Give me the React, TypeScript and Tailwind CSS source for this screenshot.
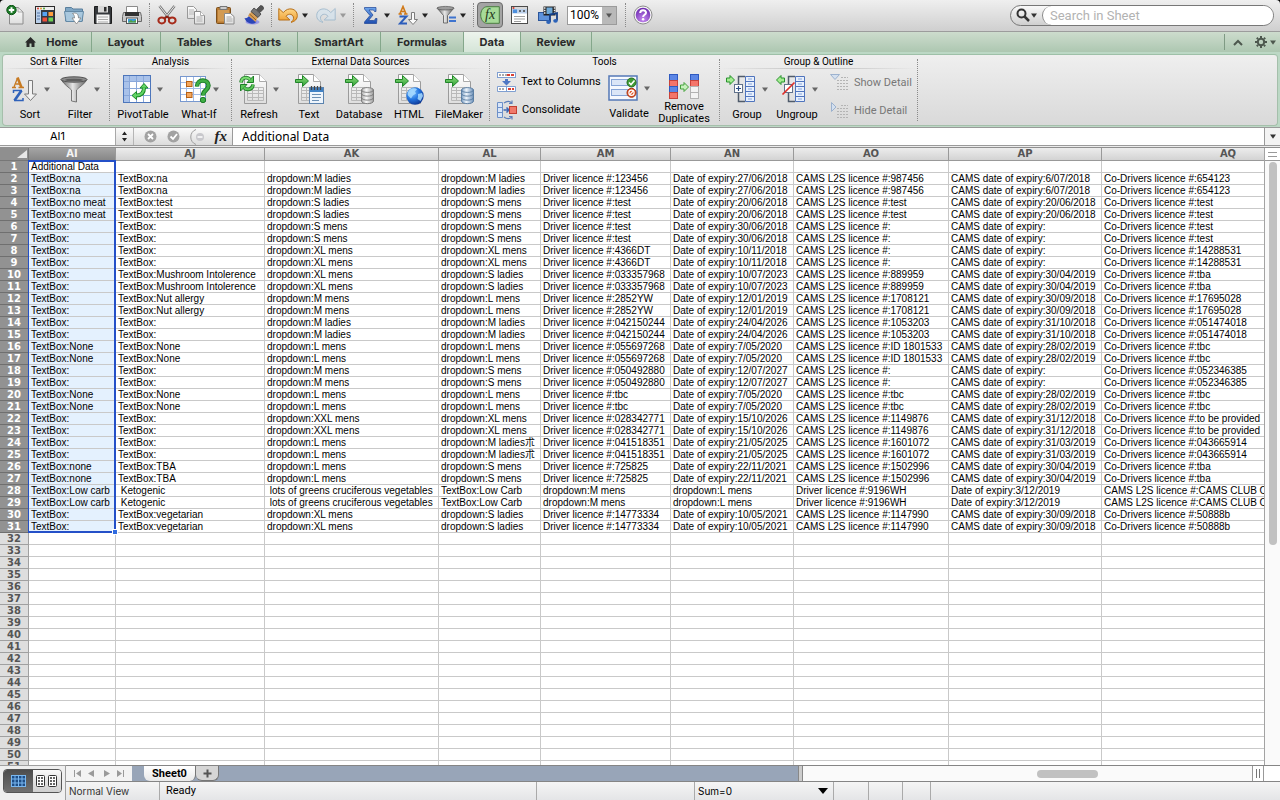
import React from "react";

type IconProps = { className?: string };

const Defs = () => (
  <svg width="0" height="0" className="absolute" aria-hidden="true">
    <defs>
      <linearGradient id="paper" x1="0" y1="0" x2="0" y2="1">
        <stop offset="0" stopColor="#ffffff" />
        <stop offset="1" stopColor="#dedede" />
      </linearGradient>
      <linearGradient id="green" x1="0" y1="0" x2="0" y2="1">
        <stop offset="0" stopColor="#8fe07f" />
        <stop offset="1" stopColor="#2f9e33" />
      </linearGradient>
      <linearGradient id="blue" x1="0" y1="0" x2="0" y2="1">
        <stop offset="0" stopColor="#6fa6ec" />
        <stop offset="1" stopColor="#1f4fb0" />
      </linearGradient>
      <linearGradient id="orange" x1="0" y1="0" x2="0" y2="1">
        <stop offset="0" stopColor="#ffd98a" />
        <stop offset="1" stopColor="#ec9a2b" />
      </linearGradient>
      <linearGradient id="metal" x1="0" y1="0" x2="1" y2="0">
        <stop offset="0" stopColor="#5c5c5c" />
        <stop offset="0.45" stopColor="#e6e6e6" />
        <stop offset="1" stopColor="#5a5a5a" />
      </linearGradient>
      <linearGradient id="drum" x1="0" y1="0" x2="1" y2="0">
        <stop offset="0" stopColor="#a9a9a9" />
        <stop offset="0.4" stopColor="#fafafa" />
        <stop offset="1" stopColor="#9c9c9c" />
      </linearGradient>
      <linearGradient id="drumBlue" x1="0" y1="0" x2="1" y2="0">
        <stop offset="0" stopColor="#7c9fc4" />
        <stop offset="0.4" stopColor="#eef5fc" />
        <stop offset="1" stopColor="#6b8fb8" />
      </linearGradient>
      <radialGradient id="globe" cx="0.35" cy="0.3" r="0.8">
        <stop offset="0" stopColor="#7fc4ff" />
        <stop offset="0.5" stopColor="#2274e0" />
        <stop offset="1" stopColor="#0b2d86" />
      </radialGradient>
      <radialGradient id="purple" cx="0.5" cy="0.8" r="0.8">
        <stop offset="0" stopColor="#c58af0" />
        <stop offset="1" stopColor="#6a27ad" />
      </radialGradient>
    </defs>
  </svg>
);

const Caret = ({ className = "fill-[#333]" }: IconProps) => (
  <svg width="6" height="5" viewBox="0 0 6 5" className={className}>
    <path d="M0 0.5h6L3 4.8z" />
  </svg>
);

/* toolbar icons */

const NewIcon = () => (
  <svg width="20" height="20" viewBox="0 0 20 20">
    <path d="M3.500 2.500h8.500l5 4.500v12H3.500z" fill="url(#paper)" stroke="#8c8c8c" />
    <path d="M12 2.500v4.500h5z" fill="#f5f5f5" stroke="#999" strokeWidth="0.800" />
    <circle cx="5.500" cy="5" r="4.700" fill="#1d7a28" stroke="#0d5516" />
    <path d="M5.500 2.300v5.400M2.800 5h5.400" stroke="#fff" strokeWidth="1.900" />
  </svg>
);

const GalleryIcon = () => (
  <svg width="20" height="20" viewBox="0 0 20 20">
    <rect x="0.500" y="1.500" width="19" height="17" fill="#353a42" stroke="#2b2b2b" />
    <rect x="1" y="2" width="18" height="3" fill="#ededed" />
    <circle cx="3" cy="3.500" r="1" fill="#d83a2c" />
    <circle cx="6" cy="3.500" r="1" fill="#e59b27" />
    <circle cx="9" cy="3.500" r="1" fill="#4ba435" />
    <rect x="1" y="5" width="5" height="13" fill="#b9cfea" />
    <path d="M2 8h3M2 11h3M2 14h3" stroke="#5577a5" />
    <rect x="7.500" y="7" width="4.500" height="4" fill="#58a4f2" />
    <rect x="13.500" y="7" width="4.500" height="4" fill="#ff9d3c" />
    <rect x="7.500" y="12.500" width="4.500" height="4" fill="#ef4f38" />
    <rect x="13.500" y="12.500" width="4.500" height="4" fill="#6ed253" />
  </svg>
);

const OpenIcon = () => (
  <svg width="20" height="20" viewBox="0 0 20 20">
    <path d="M1.500 4V2.500h6L9 4h9.500v12h-17z" fill="#7fa6c4" stroke="#5a7f9c" />
    <path d="M0.500 6.500h19l-1.500 10H2z" fill="#a9c8de" stroke="#6389a6" />
    <path d="M10.500 8c3 0 4 2 4 5h2.500l-4.500 6-4.500-6h2.500c0-2-.4-3.500-2-4.500z" fill="#fff" stroke="#777" strokeWidth="0.700" />
  </svg>
);

const SaveIcon = () => (
  <svg width="20" height="20" viewBox="0 0 20 20">
    <path d="M1.500 1.500h16l1 1v16h-17z" fill="#34373b" stroke="#1e1e1e" />
    <rect x="5" y="1" width="10" height="6.500" fill="#d8d8d8" />
    <rect x="11" y="2" width="2.500" height="4.500" fill="#2d2d2d" />
    <rect x="3.500" y="9.500" width="13" height="9" fill="#f7f7f7" />
    <path d="M5 12h10M5 14.500h10M5 17h10" stroke="#a9a9a9" />
  </svg>
);

const PrintIcon = () => (
  <svg width="20" height="20" viewBox="0 0 20 20">
    <path d="M4.500 1.500h11v7h-11z" fill="#fff" stroke="#8b8b8b" />
    <path d="M1.500 7.500h17l1 4v5h-19v-5z" fill="#c8c8c8" stroke="#6a6a6a" />
    <path d="M3 7h14v4H3z" fill="#333" />
    <rect x="4.500" y="13" width="11" height="5.500" fill="#fff" stroke="#555" />
    <path d="M6 14h8v3.500H6z" fill="#3c9bd6" />
    <path d="M6 17.500l3-2.500 2 1.500 3-1.500v2.500z" fill="#4f9f3d" />
  </svg>
);

const CutIcon = () => (
  <svg width="20" height="20" viewBox="0 0 20 20" fill="none">
    <path d="M2.500 1l9 11.500M17.500 1l-9 11.500" stroke="#777" strokeWidth="2.600" />
    <path d="M2.500 1l9 11.500M17.500 1l-9 11.500" stroke="#e9e9e9" strokeWidth="1" />
    <ellipse cx="4.800" cy="15.400" rx="3.400" ry="3" stroke="#a62a1a" strokeWidth="2" />
    <ellipse cx="15.200" cy="15.400" rx="3.400" ry="3" stroke="#a62a1a" strokeWidth="2" />
    <path d="M7.500 13.500l2.500-2 2.500 2" stroke="#8c2114" strokeWidth="2" />
  </svg>
);

const CopyIcon = () => (
  <svg width="20" height="20" viewBox="0 0 20 20">
    <path d="M1.500 1.500h6l3 3v9h-9z" fill="url(#paper)" stroke="#999" />
    <path d="M3 5h5M3 7h5M3 9h5" stroke="#b5b5b5" />
    <path d="M8.500 6.500h6l4 4v8.500h-10z" fill="url(#paper)" stroke="#8a8a8a" />
    <path d="M14.500 6.500v4h4" fill="#fff" stroke="#999" strokeWidth="0.800" />
    <path d="M10.500 12h6M10.500 14h6M10.500 16h6" stroke="#b0b0b0" />
  </svg>
);

const PasteIcon = () => (
  <svg width="20" height="20" viewBox="0 0 20 20">
    <rect x="1.500" y="2.500" width="14" height="16" rx="1" fill="#b97b33" stroke="#7c4f1a" />
    <rect x="3" y="5" width="11" height="11.500" fill="#d29a52" />
    <path d="M5 1.500h7v3H5z" fill="#ccc" stroke="#777" />
    <path d="M9.500 8.500h6l3.500 3v7.500H9.500z" fill="url(#paper)" stroke="#8a8a8a" />
    <path d="M11.500 12h5M11.500 14h6M11.500 16h6" stroke="#aaa" />
  </svg>
);

const BrushIcon = () => (
  <svg width="20" height="20" viewBox="0 0 20 20">
    <ellipse cx="8.500" cy="17" rx="7" ry="2.500" fill="#9d9be4" />
    <path d="M0.500 13c2 .5 3.500-.5 4.500-2l7.500 6c-3.500 3-10 2-12-4z" fill="#2c46b8" />
    <path d="M4 10.500L7.500 6.500l6.500 5.500-2.500 5z" fill="#d9a058" />
    <path d="M5.500 9l6.500 6" stroke="#8d5d22" />
    <path d="M7 6.500l3-3.500 7 6-3 3.500z" fill="#777" stroke="#3b3b3b" strokeWidth="0.800" />
    <path d="M12.500 4.500L16.500.5c2 0 3.500 1.500 3 3.500L16 7.500z" fill="#555" stroke="#333" strokeWidth="0.600" />
  </svg>
);

const UndoIcon = () => (
  <svg width="20" height="20" viewBox="0 0 20 20">
    <path d="M0.800 3.500v11.500h11L8 11.200c2.500-3.500 8-2 7.500 2.300-.2 1.600-1 2.800-2.500 3.800 4-.8 6.300-3.300 6.300-6.800C19.300 3.500 10 1.300 5.300 7.600z" fill="url(#orange)" stroke="#b86f16" />
  </svg>
);

const RedoIcon = () => (
  <svg width="20" height="20" viewBox="0 0 20 20" opacity="0.700">
    <path d="M19.200 3.500v11.500h-11L12 11.200c-2.500-3.500-8-2-7.500 2.300.2 1.600 1 2.800 2.500 3.800-4-.8-6.300-3.300-6.300-6.800C.7 3.500 10 1.300 14.700 7.600z" fill="#d4e3ee" stroke="#8eafc8" />
  </svg>
);

const SumIcon = () => (
  <svg width="20" height="20" viewBox="0 0 20 20">
    <path d="M4.500 2.500h11.500v4h-1.500c-.2-1-.8-1.500-2-1.500H9l4 5-4.500 5.500h4.800c1.200 0 1.800-.6 2.200-2H17l-.5 5h-12v-1.500L10 10.500 4.500 4z" fill="url(#blue)" stroke="#1d4395" strokeWidth="0.700" />
  </svg>
);

const SortSmallIcon = () => (
  <svg width="20" height="20" viewBox="0 0 20 20">
    <path d="M0.500 9h3.500M6 9h3.500M2 8.500L5 1.500l3 7.500M3.500 6.500h4" fill="none" stroke="#d07a1a" strokeWidth="1.600" />
    <path d="M1.500 11.500h7l-6.500 7h7" fill="none" stroke="#2c5dbb" strokeWidth="1.900" />
    <path d="M13.500 7.500h3v7h3L15 19.500l-4.500-5h3z" fill="#fafafa" stroke="#7d7d7d" />
  </svg>
);

const FilterSmallIcon = () => (
  <svg width="20" height="20" viewBox="0 0 20 20">
    <path d="M1 3h17l-6.500 7.500V18h-4v-7.500z" fill="url(#metal)" stroke="#555" strokeWidth="0.800" />
    <ellipse cx="9.500" cy="3.200" rx="8.500" ry="1.800" fill="#9d9d9d" stroke="#555" strokeWidth="0.700" />
    <path d="M13 12.500h7M13 16h7" stroke="#3f74cf" strokeWidth="2" />
  </svg>
);

const FxIcon = () => (
  <svg width="20" height="18" viewBox="0 0 20 18">
    <path d="M7 .7h12.300v16.600H7C3 17.300.7 13 .7 9S3 .7 7 .7z" fill="#a6db98" stroke="#4b7d42" />
    <text x="5" y="13" fontFamily="Liberation Serif, serif" fontStyle="italic" fontSize="14" fill="#1e3519">fx</text>
  </svg>
);

const ToolboxIcon = () => (
  <svg width="20" height="20" viewBox="0 0 20 20">
    <rect x="2.500" y="1.500" width="16" height="17" fill="#fff" stroke="#4b4b4b" />
    <rect x="3" y="2" width="15" height="2" fill="#d8d8d8" />
    <circle cx="4.500" cy="3" r="1" fill="#d83a2c" />
    <rect x="3" y="4" width="15" height="4.500" fill="#bcd0ea" />
    <rect x="4" y="4.500" width="4" height="3.500" fill="#4d8fdd" />
    <path d="M10 6h2M14 6h2" stroke="#444" strokeWidth="1.500" />
    <path d="M5 11.500h11M5 14h11M5 16.500h7" stroke="#9f9f9f" />
  </svg>
);

const MediaIcon = () => (
  <svg width="20" height="20" viewBox="0 0 20 20">
    <rect x="0.500" y="7.500" width="11" height="8" fill="#5e92da" stroke="#2c569b" />
    <rect x="5.500" y="1.500" width="12" height="9" fill="#202020" />
    <rect x="8.500" y="2.500" width="6" height="6.500" fill="#6faad8" />
    <path d="M6 3h1.500M6 5.500h1.500M6 8h1.500M15.800 3h1.500M15.800 5.500h1.500M15.800 8h1.500" stroke="#eee" strokeWidth="1.300" />
    <path d="M12 17V9.500l7-1.500v7.500" fill="none" stroke="#153f86" strokeWidth="1.800" />
    <ellipse cx="10.500" cy="17" rx="2.300" ry="1.900" fill="#2d63b9" />
    <ellipse cx="17.500" cy="15.800" rx="2.300" ry="1.900" fill="#2d63b9" />
  </svg>
);

const HelpIcon = () => (
  <svg width="20" height="20" viewBox="0 0 20 20" fill="none">
    <circle cx="10" cy="10" r="9" fill="#f4f4f4" stroke="#8c8c8c" />
    <circle cx="10" cy="10" r="7.300" fill="url(#purple)" />
    <path d="M7.200 8c0-3.700 5.800-3.600 5.800-.3 0 2.200-2.900 2-2.900 4.300" stroke="#fff" strokeWidth="2" />
    <circle cx="10.100" cy="14.300" r="1.200" fill="#fff" />
  </svg>
);

/* ribbon icons */

const SortIcon = () => (
  <svg width="28" height="28" viewBox="0 0 28 28" fill="none">
    <path d="M2 12.500h4M8.500 12.500h5.500M4 12L7.500 3" stroke="#c77a22" strokeWidth="1.300" />
    <path d="M7.500 2.500L11.500 12.500" stroke="#c77a22" strokeWidth="2.600" />
    <path d="M5.500 9h5" stroke="#c77a22" strokeWidth="1.300" />
    <path d="M3.500 18v-2.500h8.500M4 25.500h9V23" stroke="#2f62ba" strokeWidth="1.500" />
    <path d="M11.500 15.500L4.500 25.500" stroke="#2f62ba" strokeWidth="2.700" />
    <path d="M18.500 5.500h4v13.500h4L20.500 25.500l-6-6.500h4z" fill="#f2f2f2" stroke="#7a7a7a" />
  </svg>
);

const FilterIcon = () => (
  <svg width="28" height="28" viewBox="0 0 28 28">
    <path d="M1 4.500c3 5 8 8 10.500 10.500V26l5 1V15C19 12 25 9 27 4.500z" fill="url(#metal)" stroke="#5e5e5e" strokeWidth="0.800" />
    <ellipse cx="14" cy="4.500" rx="13" ry="2.700" fill="#8c8c8c" stroke="#555" />
    <ellipse cx="14" cy="5" rx="9" ry="1.300" fill="#5f5f5f" />
  </svg>
);

const PivotIcon = () => (
  <svg width="28" height="28" viewBox="0 0 28 28" fill="none">
    <rect x="0.500" y="0.500" width="27" height="27" fill="#fff" stroke="#4d76bb" />
    <path d="M1 1h26v5H1zM1 1h5v26H1z" fill="#a9c2ea" />
    <path d="M6.500 1v26M13.500 1v26M20.500 1v26M1 6.500h26M1 13.500h26M1 20.500h26" stroke="#8aa8da" />
    <path d="M13 20.500c5 0 8-2 8-7.500" stroke="#1d8a28" strokeWidth="4" />
    <path d="M21 8.500l4 4.500h-8zM9 20.500l4.500-4v8z" fill="#62d565" stroke="#1d8a28" />
    <path d="M12.500 20.500c5.500 0 8.500-2 8.500-8" stroke="#62d565" strokeWidth="2.200" />
  </svg>
);

const WhatIfIcon = () => (
  <svg width="32" height="28" viewBox="0 0 32 28" fill="none">
    <rect x="0.500" y="1.500" width="25" height="25" fill="#fff" stroke="#7798cf" />
    <path d="M6.500 2v24M13.500 2v24M20.500 2v24M1 7.500h24M1 13.500h24M1 19.500h24" stroke="#a3bde6" />
    <rect x="6.500" y="6.500" width="5.500" height="5" fill="#f4a75c" stroke="#b76115" />
    <rect x="6.500" y="17.500" width="5.500" height="5" fill="#f4a75c" stroke="#b76115" />
    <path d="M17 11.500C17 3.500 28.500 4 28.500 10.500c0 5-5.500 4.500-5.500 10" stroke="#1c7c26" strokeWidth="4.500" />
    <path d="M17 11.500C17 3.500 28.500 4 28.500 10.500c0 5-5.500 4.500-5.500 10" stroke="#3fae45" strokeWidth="2.700" />
    <circle cx="23" cy="25" r="2.700" fill="#3fae45" stroke="#1c7c26" />
  </svg>
);

/* spreadsheet page that every data-source icon sits on */
const Page = () => (
  <>
    <path d="M5.500 0.500h15l7 7v22h-22z" fill="url(#paper)" stroke="#9b9b9b" />
    <path d="M20.500 0.500v7h7" fill="#fff" stroke="#aaa" />
    <path d="M8.500 13.500h16v13h-16zM8.500 16.500h16M8.500 19.500h16M8.500 23.500h16M13.500 13.500v13M19.500 13.500v13" fill="none" stroke="#b9b9b9" />
  </>
);

const InArrow = () => (
  <path d="M2.500 5.500h7v-4l6 5.500-6 5.500v-4h-7z" fill="url(#green)" stroke="#1f8529" />
);

const RefreshIcon = () => (
  <svg width="28" height="31" viewBox="0 0 28 31" fill="none">
    <Page />
    <path d="M2 8.500C2.500 3 8.500 2.500 11 5.500" stroke="#1f7d28" strokeWidth="3.600" />
    <path d="M14 10.500C13.500 16 7.500 16.500 5 13.500" stroke="#1f7d28" strokeWidth="3.600" />
    <path d="M14.500 2v6.500H8zM1.500 17v-6.500H8z" fill="#5cc85a" stroke="#1f7d28" />
    <path d="M2 8.500C2.500 3 8.500 2.500 11 5.500" stroke="#7bdc72" strokeWidth="2" />
    <path d="M14 10.500C13.500 16 7.500 16.500 5 13.500" stroke="#5cc85a" strokeWidth="2" />
  </svg>
);

const TextIcon = () => (
  <svg width="32" height="31" viewBox="0 0 32 31">
    <Page />
    <InArrow />
    <rect x="16.500" y="13.500" width="14" height="16" fill="#eef5fc" stroke="#5b83ae" />
    <rect x="17" y="14" width="13" height="4" fill="#4082c6" />
    <path d="M18.500 12v4M21.500 12v4M24.500 12v4M27.500 12v4" stroke="#444" strokeWidth="1.300" />
    <path d="M19 20.500h9M19 23.500h9M19 26.500h7" stroke="#6c90b5" />
  </svg>
);

const Drum = ({ blue = false }: { blue?: boolean }) => (
  <g fill={blue ? "url(#drumBlue)" : "url(#drum)"} stroke={blue ? "#55799f" : "#777"} strokeWidth="0.900">
    <path d="M18.500 16v11c0 3.500 12 3.500 12 0V16z" />
    <path d="M18.500 19.500c0 3.500 12 3.500 12 0M18.500 23.500c0 3.500 12 3.500 12 0" fill="none" />
    <ellipse cx="24.500" cy="16" rx="6" ry="2.400" />
  </g>
);

const DatabaseIcon = () => (
  <svg width="32" height="31" viewBox="0 0 32 31">
    <Page />
    <InArrow />
    <Drum />
  </svg>
);

const HtmlIcon = () => (
  <svg width="32" height="31" viewBox="0 0 32 31">
    <Page />
    <InArrow />
    <circle cx="22" cy="22" r="8.700" fill="url(#globe)" />
    <path d="M17 15.500c3-2 6-1.500 7 0l-2 2 1 2-3 2-2 3-3-3c-1-2 0-4 2-6zM25 20l4-1 1 3-2.500 5-3-2 .5-2.500z" fill="#a9dcff" opacity="0.850" />
  </svg>
);

const FileMakerIcon = () => (
  <svg width="32" height="31" viewBox="0 0 32 31">
    <Page />
    <InArrow />
    <Drum blue />
  </svg>
);

const TextToColumnsIcon = () => (
  <svg width="19" height="21" viewBox="0 0 19 21">
    <rect x="0.500" y="0.500" width="18" height="5" fill="#fff" stroke="#7f9fd1" />
    <path d="M2 3h8" stroke="#555" strokeDasharray="2 1" />
    <path d="M10 3h7" stroke="#d94134" strokeWidth="2" strokeDasharray="3 1" />
    <path d="M8 7h3v2h3l-4.500 4.500L5 9h3z" fill="#4e77c4" />
    <path d="M0.500 14.500h18v5h-18zM9.500 14.500v5" fill="#fff" stroke="#7f9fd1" />
    <path d="M2 17h6" stroke="#555" strokeDasharray="2 1" />
    <path d="M11 17h6" stroke="#d94134" strokeWidth="2" strokeDasharray="3 1" />
  </svg>
);

const ConsolidateIcon = () => (
  <svg width="20" height="20" viewBox="0 0 20 20" fill="none">
    <path d="M0.500 2.500h5v15h-5zM0.500 7.500h5M0.500 12.500h5" fill="#d8e5f8" stroke="#6d90c9" />
    <path d="M6.500 10h5M9.500 7.500l2.500 2.500-2.500 2.500" stroke="#3f66b2" strokeWidth="1.500" />
    <path d="M7 3c3-2.500 6-2 7.500 0M15 0.500v3h-3M7 17c3 2.500 6 2 7.500 0M15 19.500v-3h-3" stroke="#5f80ba" strokeWidth="1.200" />
    <rect x="12.500" y="6.500" width="7" height="7" fill="#f0796a" stroke="#c33f30" />
  </svg>
);

const ValidateIcon = () => (
  <svg width="30" height="26" viewBox="0 0 30 26" fill="none">
    <rect x="1" y="1" width="28" height="24" fill="#f6f9fe" stroke="#5478b7" strokeWidth="1.500" />
    <rect x="3.500" y="4.500" width="19" height="6" fill="#dbe6f7" stroke="#86a4d6" />
    <rect x="3.500" y="14.500" width="19" height="6" fill="#dbe6f7" stroke="#86a4d6" />
    <circle cx="23.500" cy="7.500" r="4.500" fill="#3f9c35" stroke="#256a1d" />
    <path d="M21 7.500l2 2 3.500-4" stroke="#fff" strokeWidth="1.600" />
    <circle cx="23.500" cy="17.800" r="4.500" fill="#de5427" stroke="#a83211" />
    <circle cx="23.500" cy="17.800" r="2.600" stroke="#fff" strokeWidth="1.200" />
    <path d="M21.700 19.600l3.600-3.600" stroke="#fff" strokeWidth="1.200" />
  </svg>
);

const RemoveDuplicatesIcon = () => (
  <svg width="30" height="26" viewBox="0 0 30 26">
    <g strokeWidth="1">
      <rect x="0.500" y="0.500" width="8" height="6" fill="#5b86e6" stroke="#2f5ac0" />
      <rect x="0.500" y="6.500" width="8" height="6" fill="#f4756a" stroke="#c8433a" />
      <rect x="0.500" y="12.500" width="8" height="6" fill="#5b86e6" stroke="#2f5ac0" />
      <rect x="0.500" y="18.500" width="8" height="6" fill="#f4756a" stroke="#c8433a" />
      <rect x="21.500" y="0.500" width="8" height="6" fill="#5b86e6" stroke="#2f5ac0" />
      <rect x="21.500" y="6.500" width="8" height="6" fill="#f4756a" stroke="#c8433a" />
      <rect x="21.500" y="12.500" width="8" height="6" fill="#f3f3f3" stroke="#b2b2b2" />
      <rect x="21.500" y="18.500" width="8" height="6" fill="#f3f3f3" stroke="#b2b2b2" />
      <path d="M11.500 11h3.500V8.500l4.500 4.500-4.500 4.500V15h-3.500z" fill="#c7f0bd" stroke="#43a13a" />
    </g>
  </svg>
);

const GroupShape = () => (
  <>
    <path d="M19 1.500h-6.500v8M12.500 18v8.500H19" fill="none" stroke="#4f5b6b" strokeWidth="1.500" />
    <path d="M19.500 1.500h9v25h-9zM19.500 6.500h9M19.500 11.500h9M19.500 16.500h9M19.500 21.500h9" fill="#e8f0fc" stroke="#4f74bd" />
    <path d="M22 4h4M22 9h4M22 14h4M22 19h4M22 24h4" stroke="#86a6dd" />
    <rect x="8.500" y="9.500" width="8" height="8" fill="#fff" stroke="#60718b" />
  </>
);

const GroupIcon = () => (
  <svg width="30" height="28" viewBox="0 0 30 28">
    <GroupShape />
    <path d="M12.500 11v5M10 13.500h5" stroke="#2c4b85" strokeWidth="1.200" />
    <path d="M0.500 3h3.500V.5L8.500 5 4 9.500V7H.5z" fill="#a5ec92" stroke="#27912c" />
  </svg>
);

const UngroupIcon = () => (
  <svg width="30" height="28" viewBox="0 0 30 28">
    <GroupShape />
    <path d="M6.500 19.500l12-12" stroke="#e0302c" strokeWidth="1.700" />
    <path d="M8.500 3H5V.5L.5 5 5 9.500V7h3.500z" fill="#a5ec92" stroke="#27912c" />
  </svg>
);

const DetailIcon = ({ open = false }: { open?: boolean }) => (
  <svg width="19" height="18" viewBox="0 0 19 18">
    <path d={open ? "M0.500 0.500h9L5 5.500z" : "M1.500 0.500v9L6 5z"} fill="#d4e0ef" stroke="#9cb2cf" />
    <path d="M11 3.500h7M7 6.500h11M7 9.500h11M7 12.500h11M7 15.500h11" stroke="#b4b4b4" strokeDasharray="2 1" />
  </svg>
);

const GearIcon = () => (
  <svg width="12" height="12" viewBox="0 0 12 12" fill="none" stroke="#4d584e">
    <circle cx="6" cy="6" r="3.200" strokeWidth="2" />
    <path d="M6 0v2M6 10v2M0 6h2M10 6h2M1.800 1.800l1.300 1.300M8.900 8.900l1.300 1.300M1.800 10.200l1.300-1.300M8.900 3.100l1.300-1.300" strokeWidth="2" />
  </svg>
);

/* top toolbar */

const ToolButton = ({ label, icon, menu = false, faded = false }: { label: string; icon: React.ReactNode; menu?: boolean; faded?: boolean }) => (
  <button
    aria-label={label}
    className={menu ? "flex w-[38px] flex-none items-center justify-center gap-1" : "flex w-[29px] flex-none items-center justify-center"}
  >
    {icon}
    {menu && <Caret className={faded ? "fill-[#9a9a9a]" : "fill-[#222]"} />}
  </button>
);

const ToolDivider = () => (
  <div className="flex w-[6px] flex-none justify-center">
    <div className="h-6 border-l border-dotted border-[#8a8a8a]" />
  </div>
);

const Toolbar = () => (
  <div className="flex h-8 flex-none items-center rounded-t border-b border-[#9c9c9c] bg-linear-to-b from-[#efefef] to-[#cfcfcf] pr-[6px] pb-px pl-px">
    <ToolButton label="New" icon={<NewIcon />} />
    <ToolButton label="Template gallery" icon={<GalleryIcon />} />
    <ToolButton label="Open" icon={<OpenIcon />} />
    <ToolButton label="Save" icon={<SaveIcon />} />
    <ToolButton label="Print" icon={<PrintIcon />} />
    <ToolDivider />
    <ToolButton label="Cut" icon={<CutIcon />} />
    <ToolButton label="Copy" icon={<CopyIcon />} />
    <ToolButton label="Paste" icon={<PasteIcon />} />
    <ToolButton label="Format" icon={<BrushIcon />} />
    <ToolDivider />
    <ToolButton label="Undo" icon={<UndoIcon />} menu />
    <ToolButton label="Redo" icon={<RedoIcon />} menu faded />
    <ToolDivider />
    <ToolButton label="AutoSum" icon={<SumIcon />} menu />
    <ToolButton label="Sort" icon={<SortSmallIcon />} menu />
    <ToolButton label="Filter" icon={<FilterSmallIcon />} menu />
    <ToolDivider />
    <button aria-label="Formula builder" className="mx-px flex h-[26px] w-[26px] flex-none items-center justify-center rounded border border-[#6c6c6c] bg-[#a4a4a4]">
      <FxIcon />
    </button>
    <ToolButton label="Toolbox" icon={<ToolboxIcon />} />
    <ToolButton label="Media browser" icon={<MediaIcon />} />
    <div className="flex w-[60px] flex-none justify-center">
      <div className="flex h-[19px] w-[50px] items-center border border-[#9b9b9b] bg-white">
        <select aria-label="Zoom" className="h-full w-[34px] appearance-none pl-[2px] font-['Roboto',sans-serif] text-[12px] leading-[17px] text-black">
          <option>100%</option>
        </select>
        <span className="flex h-full flex-1 items-center justify-center bg-[#b9b9b9]">
          <Caret className="fill-[#555]" />
        </span>
      </div>
    </div>
    <ToolDivider />
    <ToolButton label="Help" icon={<HelpIcon />} />
    <div className="ml-auto flex h-[21px] w-[264px] items-center rounded-full border border-[#777] bg-linear-to-b from-[#fafafa] to-[#cfcfcf]">
      <button aria-label="Search options" className="flex w-[31px] flex-none items-center justify-center gap-px">
        <svg width="14" height="14" viewBox="0 0 14 14" fill="none" stroke="#333">
          <circle cx="5.500" cy="5.500" r="4" strokeWidth="2" />
          <path d="M8.500 8.500l4.500 4.500" strokeWidth="2.500" />
        </svg>
        <Caret />
      </button>
      <input
        aria-label="Search in Sheet"
        placeholder="Search in Sheet"
        className="h-full min-w-0 flex-1 rounded-full border-l border-[#888] bg-white pl-[7px] font-['Roboto',sans-serif] text-[13px] text-black outline-none placeholder:text-[#b2b2b2]"
      />
    </div>
  </div>
);

const tabs = [
  { name: "Home", width: "w-[92px]" },
  { name: "Layout", width: "w-[69px]" },
  { name: "Tables", width: "w-[68px]" },
  { name: "Charts", width: "w-[69px]" },
  { name: "SmartArt", width: "w-[83px]" },
  { name: "Formulas", width: "w-[83px]" },
  { name: "Data", width: "w-[57px]" },
  { name: "Review", width: "w-[71px]" },
];

const Tabs = () => (
  <div className="flex h-5 flex-none items-stretch bg-linear-to-b from-[#cddccd] to-[#adc7b1]">
    {tabs.map(({ name, width }) => (
      <button
        key={name}
        className={`${width} flex flex-none items-center justify-center gap-[10px] border-r border-[#84a78b] text-[11px] font-bold text-[#2a2a2a] ${
          name === "Data" ? "bg-linear-to-b from-[#edf4ed] to-[#d5e5d8]" : ""
        } ${name === "Home" ? "pl-3" : ""}`}
      >
        {name === "Home" && (
          <svg width="11" height="10" viewBox="0 0 11 10" fill="#2a2a2a">
            <path d="M5.500 0L11 5.500H9.500V10h-3V6.500h-2V10h-3V5.500H0z" />
          </svg>
        )}
        {name}
      </button>
    ))}
    <div className="ml-auto flex items-center pr-1">
      <span className="mr-2 h-4 border-l border-[#7f9a84]" />
      <button aria-label="Collapse ribbon" className="mr-3">
        <svg width="10" height="7" viewBox="0 0 10 7" fill="none" stroke="#4d584e" strokeWidth="2">
          <path d="M1 6l4-4 4 4" />
        </svg>
      </button>
      <button aria-label="Ribbon preferences" className="flex items-center gap-[3px]">
        <GearIcon />
        <Caret className="fill-[#4d584e]" />
      </button>
    </div>
  </div>
);

/* ribbon */

const RibbonGroup = ({ title, width, children }: { title: string; width: string; children: React.ReactNode }) => (
  <section className={`${width} flex flex-none`}>
    <div className="flex min-w-0 flex-1 flex-col">
      <h2 className="h-[13px] text-center text-[10px] leading-[14px]">{title}</h2>
      <div className="h-px bg-linear-to-r from-transparent via-[#bdbdbd] to-transparent" />
      <div className="flex flex-1 pl-[2px]">{children}</div>
    </div>
    <div className="my-1 border-l border-dotted border-[#8a8a8a]" />
  </section>
);

const RibbonButton = ({ label, icon, width = "w-[50px]", gap = "gap-[6px]", menu = false }: { label: React.ReactNode; icon: React.ReactNode; width?: string; gap?: string; menu?: boolean }) => (
  <button className={`${width} flex flex-none flex-col items-center text-[11px]`}>
    <span className={`${gap} flex h-10 flex-none items-center justify-center`}>
      {icon}
      {menu && <Caret className="fill-[#666]" />}
    </span>
    <span className="leading-[12px] whitespace-nowrap">{label}</span>
  </button>
);

const SmallButton = ({ label, icon, disabled = false }: { label: string; icon: React.ReactNode; disabled?: boolean }) => (
  <button disabled={disabled} className={`flex h-7 items-center gap-[5px] text-[11px] whitespace-nowrap ${disabled ? "text-[#777]" : ""}`}>
    {icon}
    {label}
  </button>
);

const Ribbon = () => (
  <div className="flex-none bg-[#bcd8c5] px-[2px] pt-[2px] pb-px font-['Roboto',sans-serif]">
    <div className="flex h-[72px] overflow-hidden rounded border border-[#a5bfab] border-t-[#9ec0a8] bg-linear-to-b from-[#efefef] to-[#d9d9d9]">
      <RibbonGroup title="Sort & Filter" width="w-[107px]">
        <RibbonButton label="Sort" icon={<SortIcon />} menu />
        <RibbonButton label="Filter" icon={<FilterIcon />} menu />
      </RibbonGroup>
      <RibbonGroup title="Analysis" width="w-[122px]">
        <RibbonButton label="PivotTable" icon={<PivotIcon />} width="w-[62px]" menu />
        <RibbonButton label="What-If" icon={<WhatIfIcon />} gap="gap-px" menu />
      </RibbonGroup>
      <RibbonGroup title="External Data Sources" width="w-[258px]">
        <RibbonButton label="Refresh" icon={<RefreshIcon />} menu />
        <RibbonButton label="Text" icon={<TextIcon />} />
        <RibbonButton label="Database" icon={<DatabaseIcon />} />
        <RibbonButton label="HTML" icon={<HtmlIcon />} />
        <RibbonButton label="FileMaker" icon={<FileMakerIcon />} />
      </RibbonGroup>
      <RibbonGroup title="Tools" width="w-[230px]">
        <div className="flex w-[112px] flex-none flex-col pl-[5px]">
          <SmallButton label="Text to Columns" icon={<TextToColumnsIcon />} />
          <SmallButton label="Consolidate" icon={<ConsolidateIcon />} />
        </div>
        <RibbonButton label="Validate" icon={<ValidateIcon />} menu />
        <button className="flex w-[60px] flex-none flex-col items-center text-[11px] leading-[12px]">
          <span className="flex h-[33px] flex-none items-center pt-1">
            <RemoveDuplicatesIcon />
          </span>
          <span>Remove</span>
          <span>Duplicates</span>
        </button>
      </RibbonGroup>
      <RibbonGroup title="Group & Outline" width="w-[198px]">
        <RibbonButton label="Group" icon={<GroupIcon />} menu />
        <RibbonButton label="Ungroup" icon={<UngroupIcon />} menu />
        <div className="flex flex-col pl-2">
          <SmallButton label="Show Detail" icon={<DetailIcon open />} disabled />
          <SmallButton label="Hide Detail" icon={<DetailIcon />} disabled />
        </div>
      </RibbonGroup>
    </div>
  </div>
);

const FormulaBar = () => (
  <div className="flex h-[19px] flex-none items-stretch border-y border-[#9a9a9a] bg-linear-to-b from-[#fafafa] to-[#dcdcdc]">
    <input aria-label="Name box" defaultValue="AI1" className="w-[116px] flex-none border-r border-[#a8a8a8] bg-white text-center text-[11px] outline-none" />
    <button aria-label="Name list" className="flex w-[18px] flex-none items-center justify-center border-r border-[#b5b5b5]">
      <svg width="5" height="11" viewBox="0 0 5 11" fill="#222">
        <path d="M0 4h5L2.500 0.500zM0 7h5l-2.500 3.500z" />
      </svg>
    </button>
    <div className="flex w-[99px] flex-none items-center justify-between border-r border-[#9a9a9a] pr-[5px] pl-[10px]">
      <button aria-label="Cancel">
        <svg width="13" height="13" viewBox="0 0 13 13">
          <circle cx="6.500" cy="6.500" r="6" fill="#a2a2a2" />
          <path d="M4 4l5 5M9 4l-5 5" stroke="#fff" strokeWidth="1.800" />
        </svg>
      </button>
      <button aria-label="Accept">
        <svg width="13" height="13" viewBox="0 0 13 13">
          <circle cx="6.500" cy="6.500" r="6" fill="#a2a2a2" />
          <path d="M3.500 6.500l2.500 2.500 4-5" fill="none" stroke="#fff" strokeWidth="1.800" />
        </svg>
      </button>
      <svg width="15" height="16" viewBox="0 0 15 16" fill="none">
        <path d="M6 0.500C-1 3-1 13 6 15.500" stroke="#9c9c9c" />
        <circle cx="10" cy="8" r="4" fill="#c8c8cc" />
        <path d="M7.500 8h5" stroke="#fff" strokeWidth="1.500" />
      </svg>
      <button aria-label="Insert function" className="font-['Liberation_Serif',serif] text-[15px] leading-[15px] font-bold text-[#222] italic">
        fx
      </button>
    </div>
    <input
      aria-label="Formula"
      defaultValue="Additional Data"
      className="min-w-0 flex-1 bg-white pl-[9px] font-['Noto_Sans',sans-serif] text-[12px] text-black outline-none"
    />
    <button aria-label="Expand formula bar" className="flex w-4 flex-none items-center justify-center border-l border-[#9a9a9a] bg-[#f3f3f3]">
      <Caret className="fill-[#333]" />
    </button>
  </div>
);

/* sheet */

const columns = [
  { name: "AI", width: "w-[87px]" },
  { name: "AJ", width: "w-[149px]" },
  { name: "AK", width: "w-[174px]" },
  { name: "AL", width: "w-[102px]" },
  { name: "AM", width: "w-[130px]" },
  { name: "AN", width: "w-[123px]" },
  { name: "AO", width: "w-[155px]" },
  { name: "AP", width: "w-[153px]" },
  { name: "AQ", width: "w-[253px]" },
];

const entry = (a: string, b: string, c: string, d: string, licence: string, expiry: string, cams: string, camsExpiry: string, coDriver: string) => [
  `TextBox:${a}`,
  `TextBox:${b}`,
  `dropdown:${c}`,
  `dropdown:${d}`,
  `Driver licence #:${licence}`,
  `Date of expiry:${expiry}`,
  `CAMS L2S licence #:${cams}`,
  `CAMS date of expiry:${camsExpiry}`,
  `Co-Drivers licence #:${coDriver}`,
];

// every entry is stored on two consecutive rows
const entries = [
  entry("na", "na", "M ladies", "M ladies", "123456", "27/06/2018", "987456", "6/07/2018", "654123"),
  entry("no meat", "test", "S ladies", "S mens", "test", "20/06/2018", "test", "20/06/2018", "test"),
  entry("", "", "S mens", "S mens", "test", "30/06/2018", "", "", "test"),
  entry("", "", "XL mens", "XL mens", "4366DT", "10/11/2018", "", "", "14288531"),
  entry("", "Mushroom Intolerence", "XL mens", "S ladies", "033357968", "10/07/2023", "889959", "30/04/2019", "tba"),
  entry("", "Nut allergy", "M mens", "L mens", "2852YW", "12/01/2019", "1708121", "30/09/2018", "17695028"),
  entry("", "", "M ladies", "M ladies", "042150244", "24/04/2026", "1053203", "31/10/2018", "051474018"),
  entry("None", "None", "L mens", "L mens", "055697268", "7/05/2020", "ID 1801533", "28/02/2019", "tbc"),
  entry("", "", "M mens", "S mens", "050492880", "12/07/2027", "", "", "052346385"),
  entry("None", "None", "L mens", "L mens", "tbc", "7/05/2020", "tbc", "28/02/2019", "tbc"),
  entry("", "", "XXL mens", "XL mens", "028342771", "15/10/2026", "1149876", "31/12/2018", "to be provided"),
  entry("", "", "L mens", "M ladies朮", "041518351", "21/05/2025", "1601072", "31/03/2019", "043665914"),
  entry("none", "TBA", "L mens", "S mens", "725825", "22/11/2021", "1502996", "30/04/2019", "tba"),
  [
    "TextBox:Low carb",
    " Ketogenic",
    " lots of greens cruciferous vegetables",
    "TextBox:Low Carb",
    "dropdown:M mens",
    "dropdown:L mens",
    "Driver licence #:9196WH",
    "Date of expiry:3/12/2019",
    "CAMS L2S licence #:CAMS CLUB C",
  ],
  entry("", "vegetarian", "XL mens", "S ladies", "14773334", "10/05/2021", "1147990", "30/09/2018", "50888b"),
];

const rows: string[][] = [["Additional Data"], ...entries.flatMap((e) => [e, e])];
const ROW_COUNT = 60;

const Sheet = () => (
  <div className="relative min-w-0 flex-1 overflow-hidden bg-white">
    <table className="w-[1355px] table-fixed border-separate border-spacing-0 font-['Liberation_Sans','Noto_Sans_CJK_SC',sans-serif] text-[10px] text-black">
      <thead className="font-['DejaVu_Sans',sans-serif] leading-[12px]">
        <tr>
          <th className="h-[13px] w-[29px] border-r border-b border-[#777] bg-[#8f8f8f] p-0">
            <svg width="10" height="8" viewBox="0 0 10 8" fill="#e8e8e8" className="mr-px ml-auto">
              <path d="M10 0v8H0z" />
            </svg>
          </th>
          {columns.map(({ name, width }) => (
            <th
              key={name}
              className={`${width} h-[13px] border-r border-b border-[#999] p-0 font-bold ${
                name === "AI" ? "bg-linear-to-b from-[#a5a5a5] to-[#878787] text-[#f4f4f4]" : "bg-linear-to-b from-[#ededed] to-[#d3d3d3] text-[#555]"
              }`}
            >
              {name}
            </th>
          ))}
        </tr>
      </thead>
      <tbody className="leading-[11px]">
        {Array.from({ length: ROW_COUNT }, (_, i) => (
          <tr key={i}>
            <th
              className={`h-3 border-r border-b p-0 font-['DejaVu_Sans',sans-serif] font-bold ${
                i < rows.length ? "border-[#6f6f6f] bg-[#929292] text-white" : "border-[#a0a0a0] bg-[#dedede] text-[#555]"
              }`}
            >
              {i + 1}
            </th>
            {columns.map(({ name }, c) => (
              <td
                key={name}
                className={`h-3 overflow-hidden border-r border-b border-[#c9c9c9] p-0 pl-[2px] whitespace-pre ${
                  c === 0 && i > 0 && i < rows.length ? "bg-[#e4f1fe]" : ""
                }`}
              >
                {rows[i]?.[c]}
              </td>
            ))}
          </tr>
        ))}
      </tbody>
    </table>
    {/* selection frame round AI1:AI31 */}
    <div className="pointer-events-none absolute top-3 left-7 h-[373px] w-[88px] border-2 border-l border-[#2450c8]">
      <span className="absolute -right-[4px] -bottom-[4px] h-[6px] w-[6px] border border-white bg-[#2f6be0]" />
    </div>
  </div>
);

const VerticalScroll = () => (
  <div className="flex w-4 flex-none flex-col border-l border-[#a3a3a3] bg-[#fafafa]">
    <div className="flex h-[13px] flex-none flex-col justify-center gap-[3px] border-b border-[#999] bg-white px-[3px]">
      <span className="h-px bg-[#999]" />
      <span className="h-px bg-[#999]" />
    </div>
    <div className="mx-auto mt-px h-[62%] w-2 rounded-full bg-[#c1c1c1]" />
  </div>
);

/* bottom bar */

const NavButton = ({ label, d }: { label: string; d: string }) => (
  <button aria-label={label}>
    <svg width="9" height="7" viewBox="0 0 9 7" fill="#9a9a9a">
      <path d={d} />
    </svg>
  </button>
);

const SheetBar = () => (
  <div className="flex h-[17px] flex-none border-y border-[#858585] bg-[#98a5b8]">
    <div className="flex w-[66px] flex-none items-center justify-around bg-[#f3f3f3] px-1">
      <NavButton label="First sheet" d="M1 0h1v7H1zM8 0v7L3 3.500z" />
      <NavButton label="Previous sheet" d="M7 0v7L1 3.500z" />
      <NavButton label="Next sheet" d="M2 0v7l6-3.500z" />
      <NavButton label="Last sheet" d="M1 0v7l5-3.500zM7 0h1v7H7z" />
    </div>
    <button className="ml-3 h-[15px] w-[52px] flex-none rounded-b-md border-r border-[#777] bg-linear-to-b from-white to-[#e9e9e9] font-['Roboto',sans-serif] text-[11px] leading-[14px] font-bold text-black">
      Sheet0
    </button>
    <button aria-label="Add sheet" className="flex h-[15px] w-[23px] flex-none items-center justify-center rounded-b-md border-r border-b border-[#777] bg-[#d6d6d6]">
      <svg width="9" height="9" viewBox="0 0 9 9">
        <path d="M4.500 0.500v8M0.500 4.500h8" stroke="#555" strokeWidth="2" />
      </svg>
    </button>
    <div className="flex-1" />
    <div className="w-[5px] flex-none border-x border-[#888] bg-[#ccc]" />
    <div className="flex w-[38%] max-w-[467px] flex-none items-center bg-[#fafafa]">
      <div className="flex flex-1 justify-end pr-[154px]">
        <div className="h-2 w-[61px] rounded-full bg-[#c1c1c1]" />
      </div>
      <div className="flex h-full w-3 items-center justify-center gap-[2px] border-x border-[#999] bg-white">
        <span className="h-[9px] w-px bg-[#777]" />
        <span className="h-[9px] w-px bg-[#777]" />
      </div>
    </div>
    <div className="w-4 flex-none bg-white" />
  </div>
);

const ViewSwitch = () => (
  <div className="flex w-[66px] flex-none items-center justify-center border-t border-r border-[#a0a0a0] bg-[#efefef] pb-1">
    <div className="flex h-6 w-[59px] overflow-hidden rounded border border-[#555]">
      <button aria-label="Normal view" className="flex flex-1 items-center justify-center bg-linear-to-b from-[#4d4d4d] to-[#707070]">
        <svg width="15" height="12" viewBox="0 0 15 12" fill="none">
          <rect x="0.500" y="0.500" width="14" height="11" fill="#1d4d86" stroke="#7ab8f0" />
          <path d="M4 1v10M7.500 1v10M11 1v10M1 4h13M1 8h13" stroke="#7ab8f0" />
        </svg>
      </button>
      <button aria-label="Page layout view" className="flex flex-1 items-center justify-center gap-[3px] bg-linear-to-b from-[#fafafa] to-[#cfcfcf]">
        {["left", "right"].map((side) => (
          <svg key={side} width="9" height="12" viewBox="0 0 9 12" fill="none">
            <rect x="0.500" y="0.500" width="8" height="11" rx="1" fill="#fff" stroke="#333" />
            <path d="M2 3h2M5 3h2M2 6h2M5 6h2M2 9h2M5 9h2" stroke="#333" strokeWidth="1.500" />
          </svg>
        ))}
      </button>
    </div>
  </div>
);

const StatusBar = () => (
  <div className="flex h-[18px] flex-none bg-linear-to-b from-[#f5f5f5] to-[#e4e5e7] text-[10px] leading-[18px]">
    <div className="w-[94px] flex-none border-r border-[#aaa] pl-[3px] text-[#333]">Normal View</div>
    <div className="min-w-0 flex-1 border-r border-[#aaa] pl-[6px] font-['Roboto',sans-serif] text-[11px]">Ready</div>
    <div className="w-[158px] flex-none border-r border-[#aaa]" />
    <button className="flex w-[139px] flex-none items-center justify-between border-r border-[#aaa] pr-[5px] pl-[3px]">
      Sum=0
      <svg width="10" height="6" viewBox="0 0 10 6">
        <path d="M0 0h10L5 6z" />
      </svg>
    </button>
    <div className="w-[35px] flex-none border-r border-[#aaa]" />
    <div className="w-[34px] flex-none border-r border-[#aaa]" />
    <div className="w-7 flex-none border-r border-[#aaa]" />
    <div className="w-[349px] flex-none" />
  </div>
);

export default function App() {
  return (
    <div className="flex h-screen flex-col overflow-hidden bg-black font-['Inter',sans-serif] text-black">
      <Defs />
      <Toolbar />
      <Tabs />
      <Ribbon />
      <FormulaBar />
      <div className="h-[2px] flex-none border-b border-[#8f8f8f] bg-[#ececec]" />
      <div className="flex min-h-0 flex-1">
        <Sheet />
        <VerticalScroll />
      </div>
      <div className="flex h-[35px] flex-none">
        <ViewSwitch />
        <div className="flex min-w-0 flex-1 flex-col">
          <SheetBar />
          <StatusBar />
        </div>
      </div>
    </div>
  );
}
